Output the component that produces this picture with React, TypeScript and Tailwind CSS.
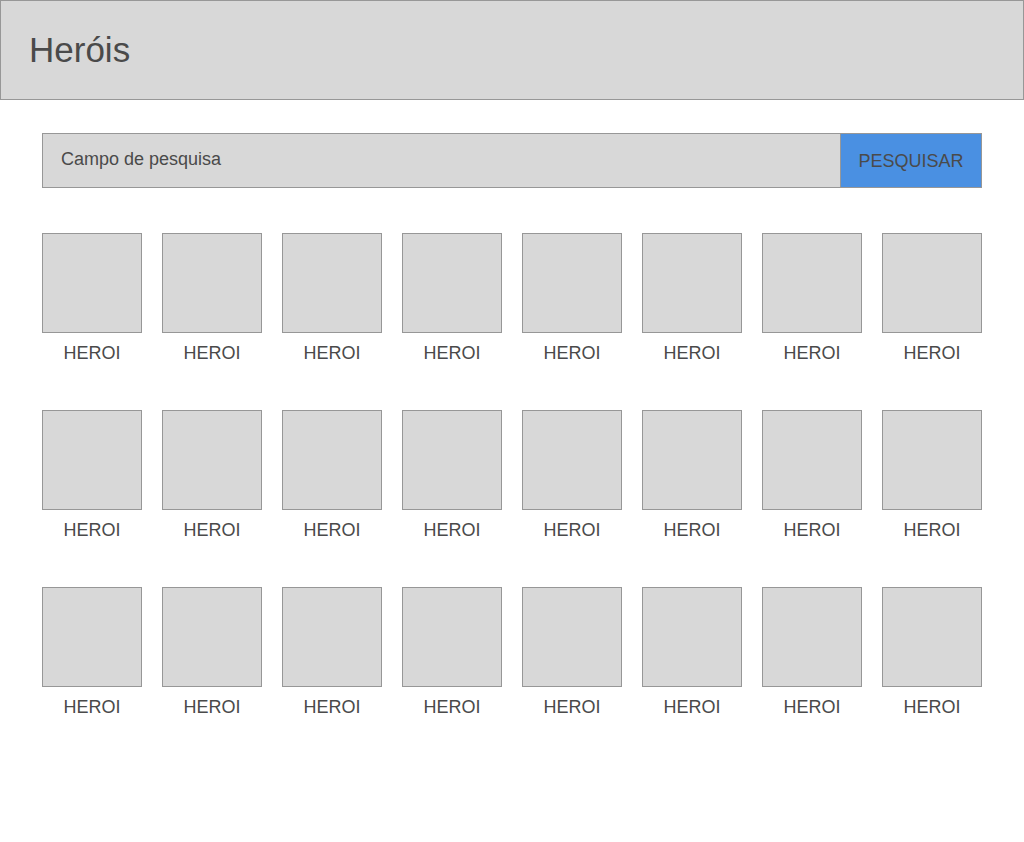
const rows = 3;
const perRow = 8;
const heroes = Array.from({ length: rows * perRow }, (_, i) => ({ id: i, name: 'HEROI' }));

function Header() {
  return (
    <header className="flex h-25 items-center border border-[#979797] bg-[#d8d8d8] px-7">
      <h1 className="text-[35px] leading-10">Heróis</h1>
    </header>
  );
}

function SearchForm() {
  return (
    <form className="flex h-[55px]" onSubmit={(e) => e.preventDefault()}>
      <input
        type="search"
        aria-label="Campo de pesquisa"
        placeholder="Campo de pesquisa"
        className="min-w-0 flex-1 appearance-none rounded-none border border-[#979797] bg-[#d8d8d8] px-[18px] pb-0.5 text-[18px] outline-none placeholder:text-[#4a4a4a] placeholder:opacity-100"
      />
      <button
        type="submit"
        className="w-[141px] border border-l-0 border-[#979797] bg-[#4a90e2] pt-0.5 text-[18px]"
      >
        PESQUISAR
      </button>
    </form>
  );
}

function HeroCard({ name }: { name: string }) {
  return (
    <li className="flex flex-col items-center">
      <div className="aspect-square w-full border border-[#979797] bg-[#d8d8d8]" />
      <span className="mt-2 text-[18px] leading-6">{name}</span>
    </li>
  );
}

export default function App() {
  return (
    <div className="min-h-screen bg-white font-['Liberation_Sans',Arial,sans-serif] text-[#4a4a4a]">
      <Header />
      <main className="px-[42px] pt-[33px]">
        <SearchForm />
        <ul className="mt-[45px] grid grid-cols-8 gap-x-5 gap-y-[45px]">
          {heroes.map((hero) => (
            <HeroCard key={hero.id} name={hero.name} />
          ))}
        </ul>
      </main>
    </div>
  );
}
